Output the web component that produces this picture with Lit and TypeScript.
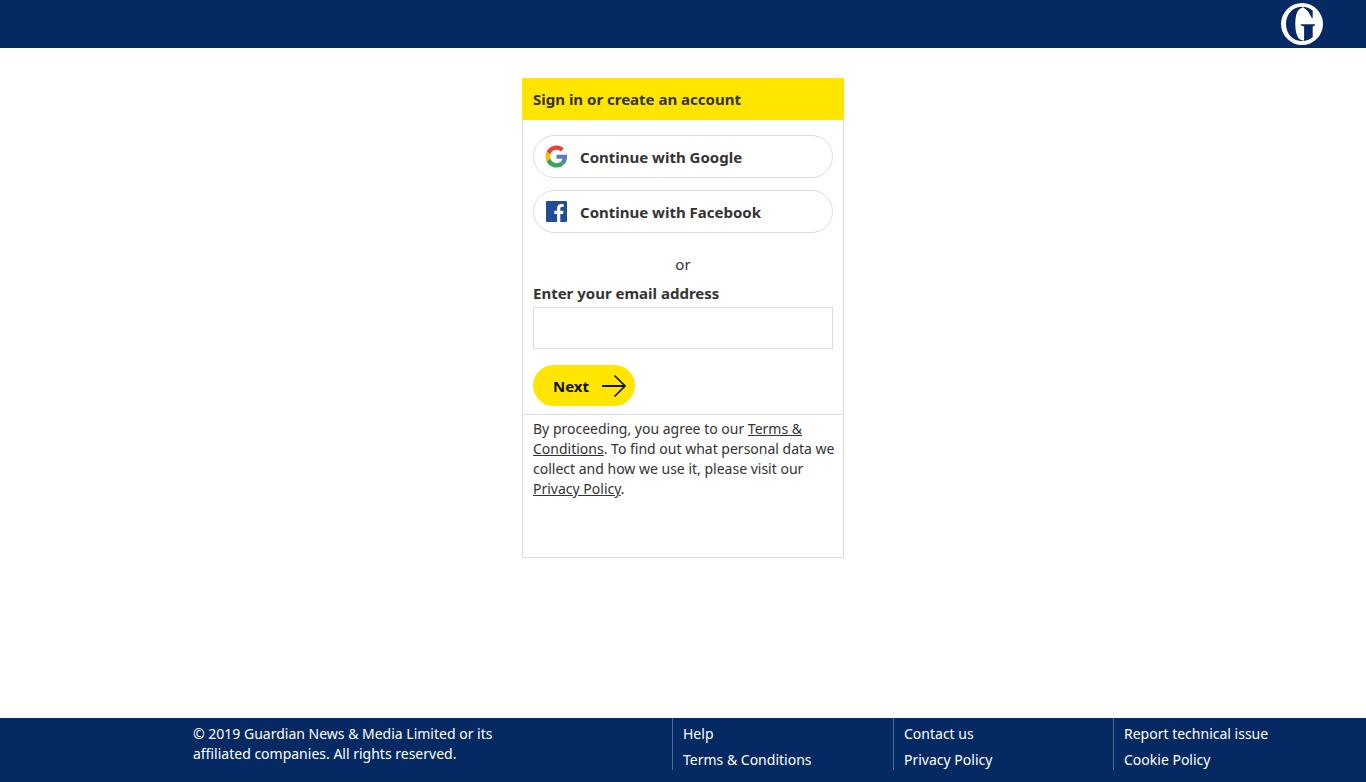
import { LitElement, html, css, svg } from "lit";
import { customElement } from "lit/decorators.js";

const roundel = svg`
  <circle cx="21" cy="21" r="21" fill="#fff" />
  <path fill="#052962" d="M21.500 3.800v.9c-4.700.4-7.200 6.800-7.200 16.300s2.500 15.900 7.200 16.300v.9C11.700 38.200 5 30.800 5 21S11.800 3.800 21.500 3.800z" />
  <path fill="#052962" d="M22.500 3.800c3.500.3 7 1.900 9.200 3.700v7.600h-.9C28.700 10.300 26 6.200 22.500 4.700zM19.800 21.300H34v1l-2.300 1.300v10.700c-2.200 1.900-5.600 3.400-9.200 3.800v-.9l.6-.6V23.500l-3.300-1.200z" />
`;

const columns = [
  ["Help", "Terms & Conditions"],
  ["Contact us", "Privacy Policy"],
  ["Report technical issue", "Cookie Policy"],
];

@customElement("app-root")
export class AppRoot extends LitElement {
  static styles = css`
    :host {
      display: flex;
      flex-direction: column;
      min-height: 100vh;
      background: #fff;
      color: #333;
      font-family: "Noto Sans", sans-serif;
      font-size: 14px;
      line-height: 20px;
    }
    * { box-sizing: border-box; }
    svg { display: block; flex: none; }
    a { color: inherit; }
    .masthead, .footer { background: #052962; }
    .bar {
      display: flex;
      justify-content: flex-end;
      max-width: 1300px;
      margin: 0 auto;
      padding: 3px 10px;
    }
    .content { flex: 1; padding: 30px 0; }
    .card {
      width: 322px;
      max-width: 100%;
      min-height: 480px;
      margin: 0 auto;
      border: 1px solid #dcdcdc;
      border-top: 0;
    }
    .title {
      margin: 0 -1px;
      padding: 11px;
      background: #ffe500;
      font-size: 15px;
      line-height: 20px;
      font-weight: 700;
    }
    .form { padding: 15px 10px 8px; border-bottom: 1px solid #dcdcdc; }
    .social {
      display: flex;
      align-items: center;
      gap: 12px;
      width: 100%;
      height: 43px;
      margin: 0 0 12px;
      padding: 0 11px;
      border: 1px solid #dcdcdc;
      border-radius: 22px;
      background: #fff;
      color: #333;
      font: inherit;
      font-size: 15px;
      font-weight: 700;
      cursor: pointer;
    }
    .or { margin: 21px 0 9px; font-size: 15px; text-align: center; }
    .label { display: block; margin-bottom: 4px; font-size: 15px; font-weight: 700; }
    .field {
      display: block;
      width: 100%;
      height: 42px;
      margin: 0 0 16px;
      padding: 0 10px;
      border: 1px solid #dcdcdc;
      border-radius: 0;
      background: #fff;
      color: #333;
      font: inherit;
      font-size: 16px;
    }
    .next {
      display: flex;
      align-items: center;
      justify-content: space-between;
      width: 102px;
      height: 41px;
      padding: 0 9px 0 20px;
      border: 0;
      border-radius: 21px;
      background: #ffe500;
      color: #121212;
      font: inherit;
      font-size: 15px;
      font-weight: 700;
      cursor: pointer;
    }
    .terms { margin: 0; padding: 4px 4px 4px 10px; }
    .footer { color: #fff; }
    .columns {
      display: grid;
      grid-template-columns: 1fr 221px 220px 220px;
      max-width: 1300px;
      margin: 0 auto;
      padding: 0 0 12px 150px;
    }
    .copyright { max-width: 320px; margin: 0; padding: 6px 10px; }
    .links {
      display: grid;
      gap: 6px;
      margin: 0;
      padding: 6px 10px 0;
      border-left: 1px solid #506991;
      list-style: none;
    }
    .links a { text-decoration: none; }
  `;

  render() {
    return html`
      <header class="masthead">
        <div class="bar">
          <a href="#" aria-label="The Guardian"><svg width="42" height="42" viewBox="0 0 42 42">${roundel}</svg></a>
        </div>
      </header>
      <main class="content">
        <section class="card">
          <div class="title" role="heading" aria-level="1">Sign in or create an account</div>
          <form class="form" @submit=${(e: Event) => e.preventDefault()}>
            <button class="social" type="button">
              <svg width="23" height="23" viewBox="-1 -1 50 50">
                <path fill="#ea4335" d="M24 9.500c3.540 0 6.710 1.220 9.210 3.600l6.850-6.850C35.900 2.380 30.470 0 24 0 14.620 0 6.510 5.380 2.560 13.220l7.980 6.190C12.430 13.720 17.740 9.500 24 9.500z" />
                <path fill="#557ebf" d="M46.980 24.550c0-1.570-.15-3.090-.38-4.550H24v9.020h12.940c-.58 2.960-2.260 5.480-4.780 7.180l7.730 6c4.510-4.180 7.090-10.360 7.090-17.650z" />
                <path fill="#fbbc05" d="M10.530 28.590A14.500 14.500 0 0 1 9.770 24c0-1.600.27-3.140.76-4.590l-7.980-6.190A24 24 0 0 0 0 24c0 3.880.92 7.540 2.560 10.780l7.970-6.190z" />
                <path fill="#36a852" d="M24 48c6.480 0 11.930-2.130 15.890-5.810l-7.730-6C30 37.640 27.240 38.490 24 38.490c-6.260 0-11.570-4.220-13.470-9.910l-7.980 6.190C6.510 42.620 14.620 48 24 48z" />
              </svg>
              <span>Continue with Google</span>
            </button>
            <button class="social" type="button">
              <svg width="23" height="23" viewBox="0 0 23 23">
                <rect x="1" y="1" width="21" height="21" rx="1" fill="#204d93" />
                <path fill="#fff" d="M15.300 22v-8.100H18l.5-3.200h-3.200V8.700c0-1 .4-1.600 1.700-1.600h1.700V4.300c-.4-.1-1.300-.2-2.400-.2-2.500 0-4.200 1.500-4.200 4.200v2.400H9.300v3.200h2.800V22z" />
              </svg>
              <span>Continue with Facebook</span>
            </button>
            <p class="or">or</p>
            <label class="label" for="email">Enter your email address</label>
            <input class="field" id="email" type="email" />
            <button class="next" type="submit">
              <span>Next</span>
              <svg width="24" height="24" viewBox="0 0 24 24" fill="none" stroke="#121212">
                <path stroke-width="2" d="M0 12h22.500" />
                <path stroke-width="1.600" d="M12.500 1.500 23 12 12.500 22.500" />
              </svg>
            </button>
          </form>
          <p class="terms">By proceeding, you agree to our <a href="#">Terms &amp; Conditions</a>. To find out what personal data we collect and how we use it, please visit our <a href="#">Privacy Policy</a>.</p>
        </section>
      </main>
      <footer class="footer">
        <div class="columns">
          <p class="copyright">© 2019 Guardian News &amp; Media Limited or its affiliated companies. All rights reserved.</p>
          ${columns.map(
            (links) => html`<ul class="links">${links.map((text) => html`<li><a href="#">${text}</a></li>`)}</ul>`
          )}
        </div>
      </footer>
    `;
  }
}
